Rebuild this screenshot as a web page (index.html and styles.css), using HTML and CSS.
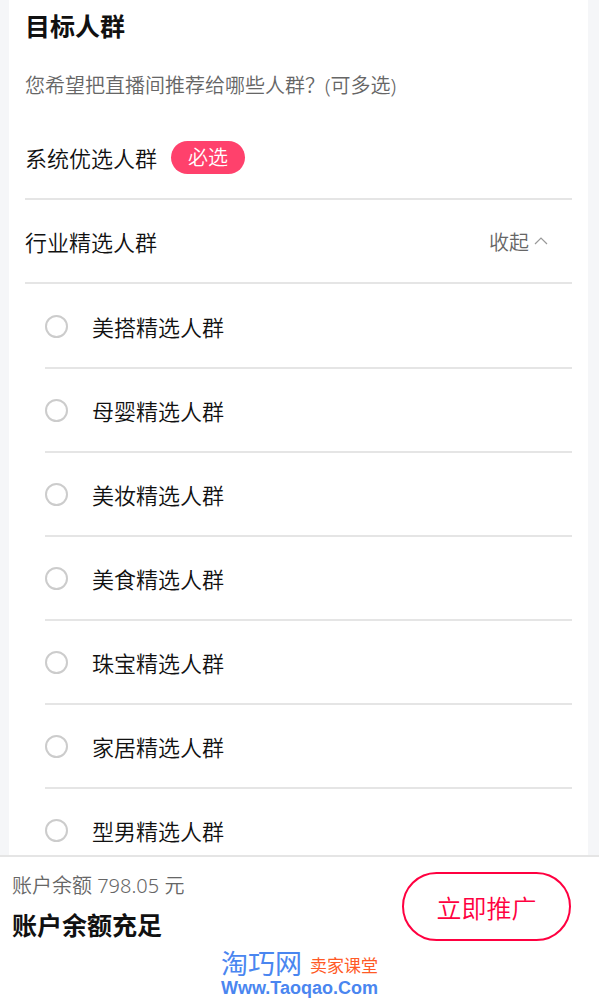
FILE: index.html
```html
<!DOCTYPE html>
<html lang="zh-CN">
  <head>
    <meta charset="UTF-8" />
    <meta name="viewport" content="width=device-width, initial-scale=1.0" />
    <title>目标人群</title>
    <link rel="stylesheet" href="styles.css">
  </head>

  <body>
    <main class="content">
      <section class="card">
        <h1 class="title">目标人群</h1>
        <p class="subtitle">您希望把直播间推荐给哪些人群？(可多选)</p>

        <div class="row">
          <span>系统优选人群</span>
          <span class="badge">必选</span>
        </div>

        <div class="row">
          <span>行业精选人群</span>
          <button class="toggle" type="button">
            收起
            <svg class="chevron" viewBox="0 0 14 8" aria-hidden="true">
              <path d="M1 7l6-6 6 6" fill="none" stroke="currentColor" stroke-width="1.2" />
            </svg>
          </button>
        </div>

        <div class="options">
          <label class="row option"><input class="check" type="checkbox"><span>美搭精选人群</span></label>
          <label class="row option"><input class="check" type="checkbox"><span>母婴精选人群</span></label>
          <label class="row option"><input class="check" type="checkbox"><span>美妆精选人群</span></label>
          <label class="row option"><input class="check" type="checkbox"><span>美食精选人群</span></label>
          <label class="row option"><input class="check" type="checkbox"><span>珠宝精选人群</span></label>
          <label class="row option"><input class="check" type="checkbox"><span>家居精选人群</span></label>
          <label class="row option"><input class="check" type="checkbox"><span>型男精选人群</span></label>
        </div>
      </section>
    </main>

    <footer class="footer">
      <div class="pay">
        <div>
          <p class="balance">账户余额 798.05 元</p>
          <p class="status">账户余额充足</p>
        </div>
        <button class="submit" type="button">立即推广</button>
      </div>
      <div class="brand">
        <div class="brand-top">
          <span class="brand-name">淘巧网</span>
          <span class="brand-sub">卖家课堂</span>
        </div>
        <div class="brand-url">Www.Taoqao.Com</div>
      </div>
    </footer>
  </body>
</html>
```

FILE: styles.css
```css
* {
  box-sizing: border-box;
}

body {
  display: flex;
  flex-direction: column;
  height: 100vh;
  margin: 0;
  background: #f5f6f8;
  color: #111;
  font-family: "Noto Sans", "Noto Sans CJK SC", sans-serif;
  font-size: 22px;
  font-weight: 350;
}

h1, p {
  margin: 0;
}

button {
  font: inherit;
  cursor: pointer;
}

.content {
  flex: 1;
  min-height: 0;
  overflow-y: auto;
  scrollbar-width: none;
}

.card {
  margin: 0 11px 0 9px;
  padding: 0 16px;
  background: #fff;
}

.title {
  font-size: 25px;
  font-weight: 700;
  line-height: 52px;
}

.subtitle {
  padding: 19px 0 15px;
  color: #666;
  font-size: 20px;
  line-height: 30px;
}

.row {
  display: flex;
  align-items: center;
  height: 84px;
  border-bottom: 2px solid #e5e5e5;
}

.badge {
  margin-left: 14px;
  padding: 0 17px;
  border-radius: 17px;
  background: #ff416c;
  color: #fff;
  font-size: 20px;
  line-height: 33px;
}

.toggle {
  display: flex;
  align-items: center;
  gap: 5px;
  margin-left: auto;
  padding: 0 24px 0 0;
  border: 0;
  background: none;
  color: #666;
  font-size: 20px;
}

.chevron {
  width: 14px;
  height: 8px;
  color: #999;
}

/* industry groups */
.options {
  padding: 1px 0 0 20px;
}

.option {
  gap: 24px;
  cursor: pointer;
}

.check {
  appearance: none;
  width: 23px;
  height: 23px;
  margin: 0;
  border: 2px solid #ccc;
  border-radius: 50%;
}

.check:checked {
  border-color: #ff0040;
  background: #ff0040;
}

/* bottom bar */
.footer {
  padding-bottom: 6px;
  border-top: 2px solid #e5e5e5;
  background: #fff;
}

.pay {
  display: flex;
  align-items: flex-start;
  justify-content: space-between;
  padding: 15px 28px 0 12px;
}

.balance {
  color: #666;
  font-size: 20px;
  line-height: 28px;
}

.status {
  font-size: 25px;
  font-weight: 700;
  line-height: 50px;
}

.submit {
  width: 169px;
  height: 69px;
  padding: 0;
  border: 2px solid #ff0040;
  border-radius: 35px;
  background: #fff;
  color: #ff0040;
  font-size: 25px;
}

.brand {
  text-align: center;
}

.brand-top {
  display: flex;
  align-items: flex-end;
  justify-content: center;
  gap: 8px;
  font-weight: 400;
}

.brand-name {
  color: #4a86f0;
  font-size: 27px;
  line-height: 28px;
}

.brand-sub {
  color: #ff5a26;
  font-size: 17px;
  line-height: 24px;
}

.brand-url {
  color: #4a86f0;
  font: bold 18px/21px "Liberation Sans", Arial, sans-serif;
}
```
